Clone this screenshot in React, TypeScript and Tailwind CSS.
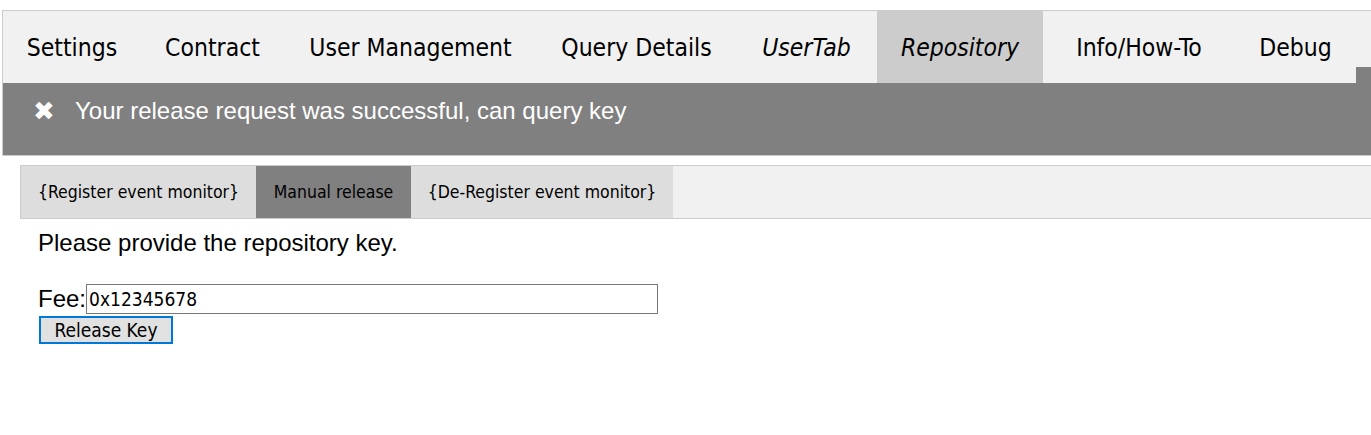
import React from 'react'

const tahoma = { fontFamily: '"DejaVu Sans Condensed", "DejaVu Sans", sans-serif', fontStretch: 'condensed' } as const

const tabs = [
  { label: 'Settings', w: 'w-[138px]' },
  { label: 'Contract', w: 'w-[143px]' },
  { label: 'User Management', w: 'w-[253px]' },
  { label: 'Query Details', w: 'w-[199px]' },
  { label: 'UserTab', w: 'w-[141px]', italic: true },
  { label: 'Repository', w: 'w-[166px]', italic: true, active: true },
  { label: 'Info/How-To', w: 'w-[192px]' },
  { label: 'Debug', w: 'w-[121px]' },
]

const subTabs = [
  { label: '{Register event monitor}', w: 'w-[235px]' },
  { label: 'Manual release', w: 'w-[155px]', active: true },
  { label: '{De-Register event monitor}', w: 'w-[262px]' },
]

export default function App() {
  return (
    <div className="w-[1371px] h-[435px] overflow-hidden bg-white text-black">
      {/* Main tab box */}
      <div className="pt-[10px] pl-[2px]">
        <div className="border border-r-0 border-[#ccc]">
          <div className="flex h-[72px] bg-[#f1f1f1]">
            {tabs.map((t) => (
              <div
                key={t.label}
                className={`${t.w} shrink-0 flex items-center justify-center pt-[3px] whitespace-nowrap text-[24.5px] ${
                  t.italic ? 'italic' : ''
                } ${t.active ? 'bg-[#ccc]' : ''}`}
                style={tahoma}
              >
                {t.label}
              </div>
            ))}
            <div className="flex-1 flex flex-col justify-end">
              <div className="h-[16px] bg-[#808080]" />
            </div>
          </div>
          {/* Notification */}
          <div
            className="h-[72px] bg-[#808080] text-white text-[24px] flex items-start pt-[14px] pl-[30px]"
            style={{ fontFamily: '"Liberation Sans", Arial, sans-serif' }}
          >
            <span className="w-[42px] text-[26px] leading-[28px]">✖</span>
            <span className="leading-[28px]">Your release request was successful, can query key</span>
          </div>
        </div>
      </div>

      {/* Sub tab area */}
      <div className="pl-[20px] mt-[9px]">
        <div className="flex h-[54px] border border-r-0 border-[#ccc] bg-[#f1f1f1]">
          {subTabs.map((t) => (
            <div
              key={t.label}
              className={`${t.w} shrink-0 flex items-center justify-center whitespace-nowrap text-[17.5px] ${
                t.active ? 'bg-[#808080]' : 'bg-[#ddd]'
              }`}
              style={tahoma}
            >
              {t.label}
            </div>
          ))}
        </div>
        <div className="pl-[18px] text-[24px]" style={{ fontFamily: '"Liberation Sans", Arial, sans-serif' }}>
          <p className="mt-[10px] leading-[28px]">Please provide the repository key.</p>
          <div className="mt-[27px] flex items-center h-[30px]">
            <span className="leading-[28px]">Fee:</span>
            <input
              className="w-[572px] h-[30px] border border-[#767676] px-[2px] text-[19px] outline-none"
              style={tahoma}
              defaultValue="0x12345678"
            />
          </div>
          <button
            className="block mt-[2px] ml-[1px] w-[134px] h-[28px] border-2 border-[#0078d7] bg-[#e1e1e1] text-[19px] leading-none"
            style={tahoma}
          >
            Release Key
          </button>
        </div>
      </div>
    </div>
  )
}
